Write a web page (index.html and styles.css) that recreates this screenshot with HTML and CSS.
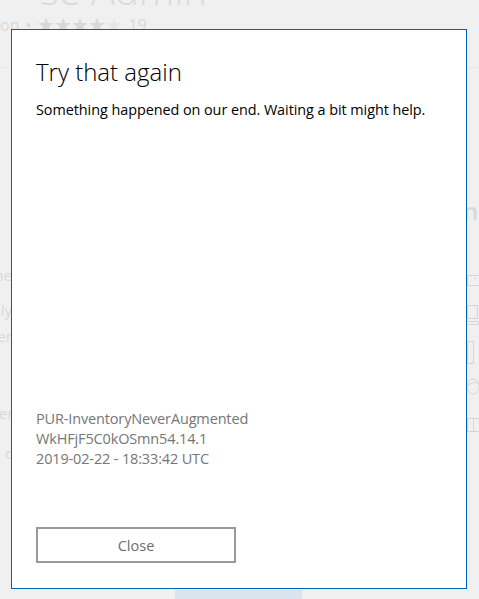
FILE: index.html
```html
<!DOCTYPE html>
<html lang="en">
<head>
<meta charset="utf-8">
<title>Try that again</title>
<link rel="stylesheet" href="styles.css">
</head>
<body>
<div class="page">
  <div class="bg-title">se Admin</div>
  <div class="bg-rating"><span>on</span><span class="dot">•</span><span class="stars">★★★★<span class="off">★</span></span><span>19</span></div>
  <div class="bg-sep"></div>
  <div class="bg-main">
    <div class="bg-left">
      <div class="l1">the</div>
      <div class="l2">apply</div>
      <div class="l3">Enter</div>
      <div class="l4">Order</div>
      <div class="l5">25 c</div>
    </div>
    <div class="bg-right">
      <div class="r-head">ni</div>
      <svg class="r-icons" width="14" height="170" viewBox="0 0 14 170" fill="none" stroke="#d6d6d6" stroke-width="1">
        <rect x="2.5" y="7.5" width="12" height="10"/>
        <line x1="9" y1="10.5" x2="11" y2="10.5"/>
        <rect x="2.5" y="37.5" width="10" height="13"/>
        <path d="M2 53.5 H13 L14 56.5 H2"/>
        <rect x="2.5" y="73.5" width="6" height="22"/>
        <ellipse cx="8" cy="118.5" rx="6" ry="7.5"/>
        <path d="M3 117 Q8 113 14 115"/>
        <rect x="2.5" y="150.5" width="13" height="13"/>
        <line x1="8.5" y1="150" x2="8.5" y2="164"/>
      </svg>
    </div>
  </div>
  <div class="bg-button"></div>
</div>

<div class="dialog" role="dialog">
  <h1 class="title">Try that again</h1>
  <p class="message">Something happened on our end. Waiting a bit might help.</p>
  <div class="spacer"></div>
  <div class="details">
    <div>PUR-InventoryNeverAugmented</div>
    <div>WkHFjF5C0kOSmn54.14.1</div>
    <div>2019-02-22 - 18:33:42 UTC</div>
  </div>
  <div class="actions">
    <button class="close-btn">Close</button>
  </div>
</div>
</body>
</html>
```
FILE: styles.css
```css
html, body {
  margin: 0;
  padding: 0;
}
body {
  width: 479px;
  height: 599px;
  overflow: hidden;
  background: #f0f0f0;
  font-family: "Open Sans", "Noto Sans", sans-serif;
  position: relative;
}
.page {
  color: #d9d9d9;
  height: 599px;
  display: flex;
  flex-direction: column;
}
.bg-title {
  font-size: 40px;
  font-weight: 300;
  line-height: 40px;
  margin-top: -30px;
  margin-left: 40px;
  white-space: nowrap;
}
.bg-rating {
  display: flex;
  align-items: center;
  gap: 6px;
  font-size: 16px;
  line-height: 22px;
  margin-top: 4px;
  white-space: nowrap;
}
.stars { font-size: 20px; letter-spacing: -1px; }
.stars .off { color: #e6e6e6; }
.bg-sep {
  height: 1px;
  background: #e8e8e8;
  margin-top: 31px;
}
.bg-main {
  flex: 1;
  display: flex;
  justify-content: space-between;
}
.bg-left {
  width: 12px;
  overflow: hidden;
  font-size: 15px;
  line-height: 20px;
  white-space: nowrap;
}
.bg-left div { text-align: right; width: 40px; margin-left: -28px; }
.l1 { margin-top: 197px; }
.l2 { margin-top: 15px; }
.l3 { margin-top: 6px; }
.l4 { margin-top: 57px; }
.l5 { margin-top: 20px; }
.bg-right {
  width: 20px;
  display: flex;
  flex-direction: column;
  align-items: flex-start;
}
.r-head {
  font-size: 24px;
  font-weight: 600;
  margin-top: 131px;
  margin-left: 4px;
  line-height: 24px;
  white-space: nowrap;
}
.r-icons { margin-left: 6px; margin-top: 45px; }
.bg-button {
  position: absolute;
  left: 175px;
  top: 590px;
  width: 127px;
  height: 9px;
  background: #d9e4ee;
}

.dialog {
  position: absolute;
  left: 11px;
  top: 29px;
  background: #ffffff;
  border: 1px solid #0063b1;
  display: flex;
  flex-direction: column;
  padding: 0 24px 25px 24px;
  box-sizing: content-box;
  width: 406px;
  height: 533px;
}
.title {
  font-size: 24px;
  font-weight: 300;
  line-height: 32px;
  color: #000;
  margin: 26px 0 0 0;
}
.message {
  font-size: 14.4px;
  letter-spacing: -0.05px;
  line-height: 20px;
  margin: 12px 0 0 0;
  color: #000;
  white-space: nowrap;
}
.spacer { flex: 1; }
.details {
  font-size: 14.5px;
  letter-spacing: -0.15px;
  line-height: 20px;
  color: #767676;
}
.actions {
  margin-top: 58px;
}
.close-btn {
  width: 200px;
  height: 36px;
  border: 2px solid #999999;
  background: #ffffff;
  color: #6d6d6d;
  font-family: inherit;
  font-size: 14.5px;
  padding: 0;
  display: block;
}
```
